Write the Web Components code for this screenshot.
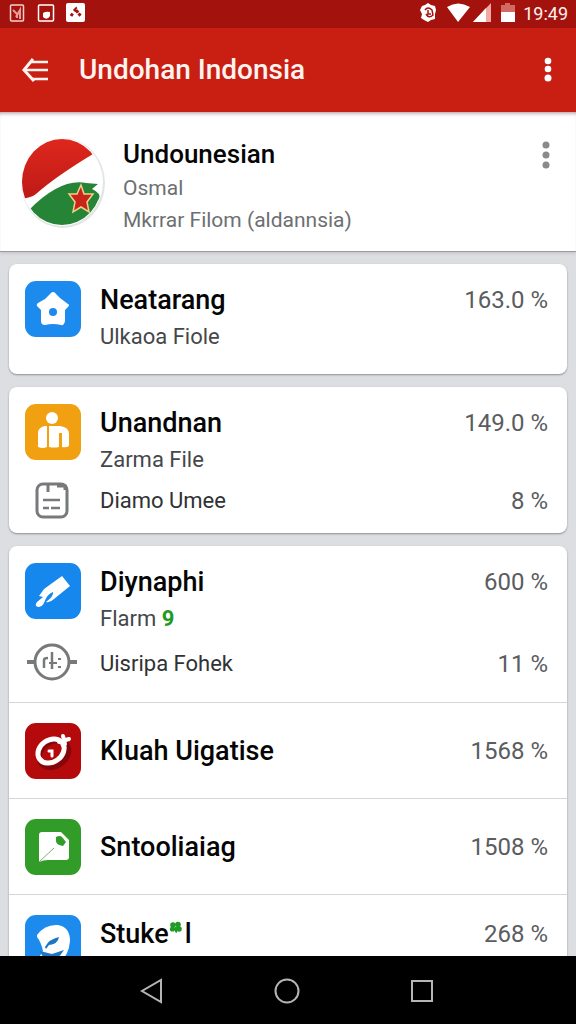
<!DOCTYPE html>
<html lang="id">
<head>
<meta charset="utf-8">
<meta name="viewport" content="width=device-width, initial-scale=1">
<title>Undohan Indonsia</title>
<style>
  html, body { margin: 0; height: 100%; }
  body { font-family: Roboto, "Liberation Sans", sans-serif; background: #dddee2; color: #050505; }
</style>
</head>
<body>
<phone-screen>
  <status-bar slot="top"></status-bar>
  <app-bar slot="top">Undohan Indonsia</app-bar>
  <profile-header>
    <span slot="name">Undounesian</span>
    <span slot="kind">Osmal</span>
    <span slot="note">Mkrrar Filom (aldannsia)</span>
  </profile-header>
  <list-card>
    <list-row icon="home"><span slot="name">Neatarang</span><span slot="value">163.0 %</span><span slot="sub">Ulkaoa Fiole</span></list-row>
  </list-card>
  <list-card>
    <list-row icon="person" detail="note"><span slot="name">Unandnan</span><span slot="value">149.0 %</span><span slot="sub">Zarma File</span><span slot="detail">Diamo Umee</span><span slot="detail-value">8 %</span></list-row>
  </list-card>
  <list-card>
    <list-row icon="brush" detail="dial" roomy><span slot="name">Diynaphi</span><span slot="value">600 %</span><span slot="sub">Flarm <green-count>9</green-count></span><span slot="detail">Uisripa Fohek</span><span slot="detail-value">11 %</span></list-row>
    <list-row icon="swirl" single><span slot="name">Kluah Uigatise</span><span slot="value">1568 %</span></list-row>
    <list-row icon="sheet" single><span slot="name">Sntooliaiag</span><span slot="value">1508 %</span></list-row>
    <list-row icon="pen" single top><span slot="name">Stuke<clover-mark></clover-mark>l</span><span slot="value">268 %</span></list-row>
  </list-card>
  <nav-bar slot="bottom"></nav-bar>
</phone-screen>

<script>
const define = (name, html, setup) => {
  const template = document.createElement('template');
  template.innerHTML = html;
  customElements.define(name, class extends HTMLElement {
    constructor() {
      super();
      this.attachShadow({ mode: 'open' }).append(template.content.cloneNode(true));
    }
    connectedCallback() { if (setup) setup(this, this.shadowRoot); }
  });
};

define('phone-screen', `
<style>
  :host { display: flex; flex-direction: column; height: 100vh; overflow: hidden; }
  main { flex: 1; min-height: 0; overflow-y: auto; scrollbar-width: none; background: #dddee2; }
</style>
<slot name="top"></slot><main><slot></slot></main><slot name="bottom"></slot>`);

define('status-bar', `
<style>
  :host { display: flex; align-items: center; justify-content: space-between; height: 28px; padding: 0 8px; background: #a3120c; color: #fff2ef; flex: none; }
  div { display: flex; align-items: center; gap: 8px; }
  svg { display: block; }
  time { font-size: 18px; line-height: 24px; }
</style>
<div>
  <svg width="80" height="24" viewBox="0 0 80 24" fill="none" stroke="#f6cfc9" stroke-width="1.5">
    <rect x="2.5" y="3" width="13" height="16" rx="1"/><path d="M5 8l4 4v4M8 15l4-7v9" stroke="#e79d96" stroke-width="2"/>
    <rect x="30.500" y="3" width="15" height="16" rx="1" stroke="#fff"/><path d="M35 11q3-2 7-1v4q-3 5-7 1z" fill="#fff" stroke="none"/>
    <rect x="58" y="1" width="19" height="19" rx="2" fill="#fff" stroke="none"/><path d="M63 14l2-3M66 9l2-2 2 4 3 3" stroke="#a3120c" stroke-width="3" stroke-dasharray="3 1"/>
  </svg>
</div>
<div>
  <svg width="98" height="24" viewBox="0 0 98 24">
    <path d="M11 1l3 2 4 1 1 4-1 4 0 5-4 1-3 2-4-2-3-2 1-4-2-4 2-4 3-1z" fill="#fff"/><path d="M8 8q3-4 7 0l1 5q-4 4-7-1M11 8v4h3" fill="none" stroke="#a3120c" stroke-width="1.500"/>
    <path d="M30 5q11-7 23 0L41 20z" fill="#fff"/>
    <path d="M56 20L74 1v19z" fill="#f2a9a3"/><path d="M56 20L69 6v14z" fill="#fff"/>
    <path d="M88 1h5v2h5v7H84V3h4z" fill="#d06a62"/><path d="M84 10h14v10H84z" fill="#fff"/>
  </svg>
  <time datetime="19:49">19:49</time>
</div>`);

define('app-bar', `
<style>
  :host { display: flex; align-items: center; height: 84px; padding: 0 12px 0 16px; gap: 20px; background: #c81f12; color: #fff4f0; flex: none; }
  h1 { flex: 1; margin: 0; font-size: 28px; line-height: 36px; font-weight: 500; }
  button { border: 0; padding: 0; background: none; color: inherit; height: 44px; display: grid; place-items: center; }
  .back { width: 43px; justify-content: start; }
  .more { width: 33px; }
</style>
<button class="back" aria-label="Kembali"><svg width="34" height="26" viewBox="0 0 34 26" fill="none" stroke="#fff4f0" stroke-width="2.500"><path d="M17 2L8 13l10 11" stroke-width="3"/><path d="M15 5h17M9 13h23M16 22h16"/></svg></button>
<h1><slot></slot></h1>
<button class="more" aria-label="Menu"><svg width="8" height="26" viewBox="0 0 8 26" fill="#fff"><circle cx="4" cy="4" r="3.300"/><circle cx="4" cy="12" r="3.300"/><circle cx="4" cy="21" r="3.500"/></svg></button>`);

define('profile-header', `
<style>
  :host { display: flex; align-items: flex-start; gap: 17px; padding: 24px 14px 15px 20px; background: #fff; border-bottom: 1px solid #9b9b9f; box-shadow: inset 0 4px 4px -3px #a98f95, 0 1px 3px #bdbec2; }
  .text { flex: 1; display: grid; color: #6d6f71; font-size: 21px; line-height: 32px; }
  h2 { margin: 0; font-size: 26px; line-height: 36px; font-weight: 500; color: #050505; }
  button { border: 0; padding: 0; background: none; width: 33px; height: 38px; display: grid; place-items: center; }
  svg { display: block; flex: none; }
</style>
<svg width="86" height="92" viewBox="0 0 86 92">
  <defs>
    <clipPath id="disc"><ellipse cx="42" cy="46" rx="40" ry="43"/></clipPath>
    <linearGradient id="red" x2="0" y2="1"><stop stop-color="#e0281d"/><stop offset="1" stop-color="#bd1a17"/></linearGradient>
  </defs>
  <ellipse cx="43" cy="47" rx="42" ry="45" fill="#e3e4e4"/><ellipse cx="42" cy="46" rx="41" ry="44" fill="#fff"/>
  <g clip-path="url(#disc)">
    <path d="M0 0h86v8L73 18Q35 41 16 58q-5 4-16 5z" fill="url(#red)"/>
    <path d="M8 75Q40 42 66 47l12 1-6 5q8 3 9 12L76 92H20z" fill="#268437"/>
  </g>
  <path d="M61 49l3 9 9 0-6 8 2 10-8-5-8 5 2-10-6-8 8 0z" fill="#c9251b" stroke="#f1cf88" stroke-width="1.500"/>
</svg>
<div class="text"><h2><slot name="name"></slot></h2><slot name="kind"></slot><slot name="note"></slot></div>
<button aria-label="Opsi"><svg width="8" height="30" viewBox="0 0 8 30" fill="#8a8a8a"><circle cx="4" cy="5" r="3.500"/><circle cx="4" cy="15" r="3.500"/><circle cx="4" cy="25" r="3.500"/></svg></button>`);

define('list-card', `
<style>
  :host { display: block; margin: 12px 9px 13px; background: #fff; border-radius: 8px; box-shadow: 0 1px 2px #8c8d91; }
</style>
<slot></slot>`);

const ICONS = {
  home: ['#1d8bee', '<path d="M28 11q2 0 3 2l4 4 8 6q2 1 0 3l-3 3v11q-1 5-4 4-8-2-16 0-4 0-4-4V29l-4-4q-1-2 1-3l7-4 6-6q1-1 2-1z" fill="#fff"/><circle cx="28" cy="31" r="4" fill="#1d8bee"/>'],
  person: ['#f0a010', '<circle cx="27" cy="14" r="6" fill="#fff"/><path d="M13 28q1-5 7-6h2v21q-4 2-9 0zM24 22h11q9 1 9 8v12q-3 2-7 1V29h-3v14q-5 1-10 0z" fill="#fff"/>'],
  brush: ['#1687ec', '<path d="M37 13l8 10-16 13q-4 4-8 3 8-6 7-10-6 2-9 11-2 4-6 4-4-1-1-5l6-5-4-1 5-7z" fill="#fff"/>'],
  swirl: ['#b40a0c', '<ellipse cx="29" cy="31" rx="16" ry="12" fill="none" stroke="#84060a" stroke-width="5" transform="rotate(-35 29 31)"/><g fill="none" stroke="#fff" stroke-linecap="round"><ellipse cx="26" cy="28" rx="14" ry="11" stroke-width="5" transform="rotate(-35 26 28)"/><path d="M34 19l10-3M38 13l2 8" stroke-width="4"/><path d="M24 28h3v5" stroke-width="3"/></g>'],
  sheet: ['#329c28', '<path d="M14 16q0-3 3-3h19l8 8v17q0 3-3 3H23q-5 0-9 2z" fill="#fff"/><path d="M14 43l15-14" stroke="#7fae78" stroke-width="1"/><path d="M31 18q4-2 6 0l4 5-3 4q-7-1-7-5z" fill="#329c28"/>'],
  pen: ['#1c8bed', '<path d="M12 20q8-11 21-10 12 2 12 16-1 15-12 23-11 4-20-5l5-8q-2-9-6-14z" fill="#fff"/><path d="M20 32q4-8 14-10-1 7-10 8l-3 4zM15 36l12 3 12-4q-6 10-15 12-6-3-9-11z" fill="#1c76c4"/>']
};
const DETAIL_ICONS = {
  note: '<g fill="none" stroke="#77797b" stroke-width="3"><rect x="12" y="6" width="30" height="33" rx="6"/><path d="M23 6v8M32 8h8v4" /><path d="M18 22h17M18 30h6M26 30h9" stroke-width="2.500"/></g>',
  dial: '<g fill="none" stroke="#77797b" stroke-width="3"><circle cx="27" cy="21" r="17"/><path d="M2 21h8M44 21h8" stroke-width="4"/><path d="M27 11v17M19 27v-8q0-2 4-2" stroke-width="2.500"/><path d="M24 22h8M33 18h3M33 26h3" stroke-width="2"/></g>'
};

define('list-row', `
<style>
  :host { display: grid; grid-template-columns: 56px 1fr auto; column-gap: 19px; padding: 17px 19px 19px 16px; align-items: start; }
  :host([detail]) { padding-bottom: 11px; }
  :host([single]) { padding: 20px 19px 19px 16px; border-top: 1px solid #d3d5d8; align-items: center; }
  :host([top]) { align-items: start; }
  .tile { grid-row: span 2; }
  :host([single]) .tile { grid-row: auto; }
  svg { display: block; overflow: visible; }
  h3 { margin: 0; font-size: 27px; line-height: 38px; font-weight: 500; white-space: nowrap; }
  .value { font-size: 24px; line-height: 38px; color: #5a5c5e; white-space: nowrap; }
  .sub { grid-column: 2 / 4; font-size: 22px; line-height: 36px; color: #45474a; }
  .detail { grid-column: 1 / 4; display: grid; grid-template-columns: 56px 1fr auto; column-gap: 19px; align-items: center; height: 44px; }
  :host([roomy]) .detail { height: 54px; }
  .detail .label { font-size: 22px; line-height: 36px; color: #303234; }
</style>
<div class="tile"></div>
<h3><slot name="name"></slot></h3>
<div class="value"><slot name="value"></slot></div>`, (host, root) => {
  const [color, art] = ICONS[host.getAttribute('icon')];
  root.querySelector('.tile').innerHTML =
    `<svg width="56" height="56" viewBox="0 0 56 56"><rect width="56" height="56" rx="11" fill="${color}"/>${art}</svg>`;
  const add = html => root.append(document.createRange().createContextualFragment(html));
  if (!host.hasAttribute('single')) add('<div class="sub"><slot name="sub"></slot></div>');
  const detail = host.getAttribute('detail');
  if (detail) add(`<div class="detail"><svg width="56" height="46" viewBox="0 0 56 46">${DETAIL_ICONS[detail]}</svg>
    <span class="label"><slot name="detail"></slot></span><span class="value"><slot name="detail-value"></slot></span></div>`);
});

define('green-count', `
<style>:host { display: inline; color: #1f9a24; font-weight: 700; }</style><slot></slot>`);

define('clover-mark', `
<style>:host { display: inline-block; width: 16px; height: 14px; vertical-align: 8px; line-height: 0; } svg { display: block; }</style>
<svg width="14" height="14" viewBox="0 0 14 14" fill="#249a26"><circle cx="4" cy="4" r="2.800"/><circle cx="9" cy="3.500" r="2.800"/><circle cx="3.500" cy="8" r="2.600"/><circle cx="10" cy="8" r="2.800"/><path d="M6 6l2 0 0 6-2-1z"/></svg>`);

define('nav-bar', `
<style>
  :host { display: flex; align-items: center; justify-content: space-between; height: 68px; padding: 0 118px 0 115px; background: #000; flex: none; }
  button { border: 0; padding: 0; background: none; width: 72px; height: 56px; display: grid; place-items: center; }
  svg { display: block; fill: none; stroke: #b5b5b5; stroke-width: 2; }
</style>
<button aria-label="Kembali"><svg width="28" height="28" viewBox="0 0 28 28"><path d="M24 4v22L5 15z"/></svg></button>
<button aria-label="Beranda"><svg width="28" height="28" viewBox="0 0 28 28"><circle cx="14" cy="15" r="11.500"/></svg></button>
<button aria-label="Terkini"><svg width="28" height="28" viewBox="0 0 28 28"><rect x="4" y="5" width="20" height="20"/></svg></button>`);
</script>
</body>
</html>
